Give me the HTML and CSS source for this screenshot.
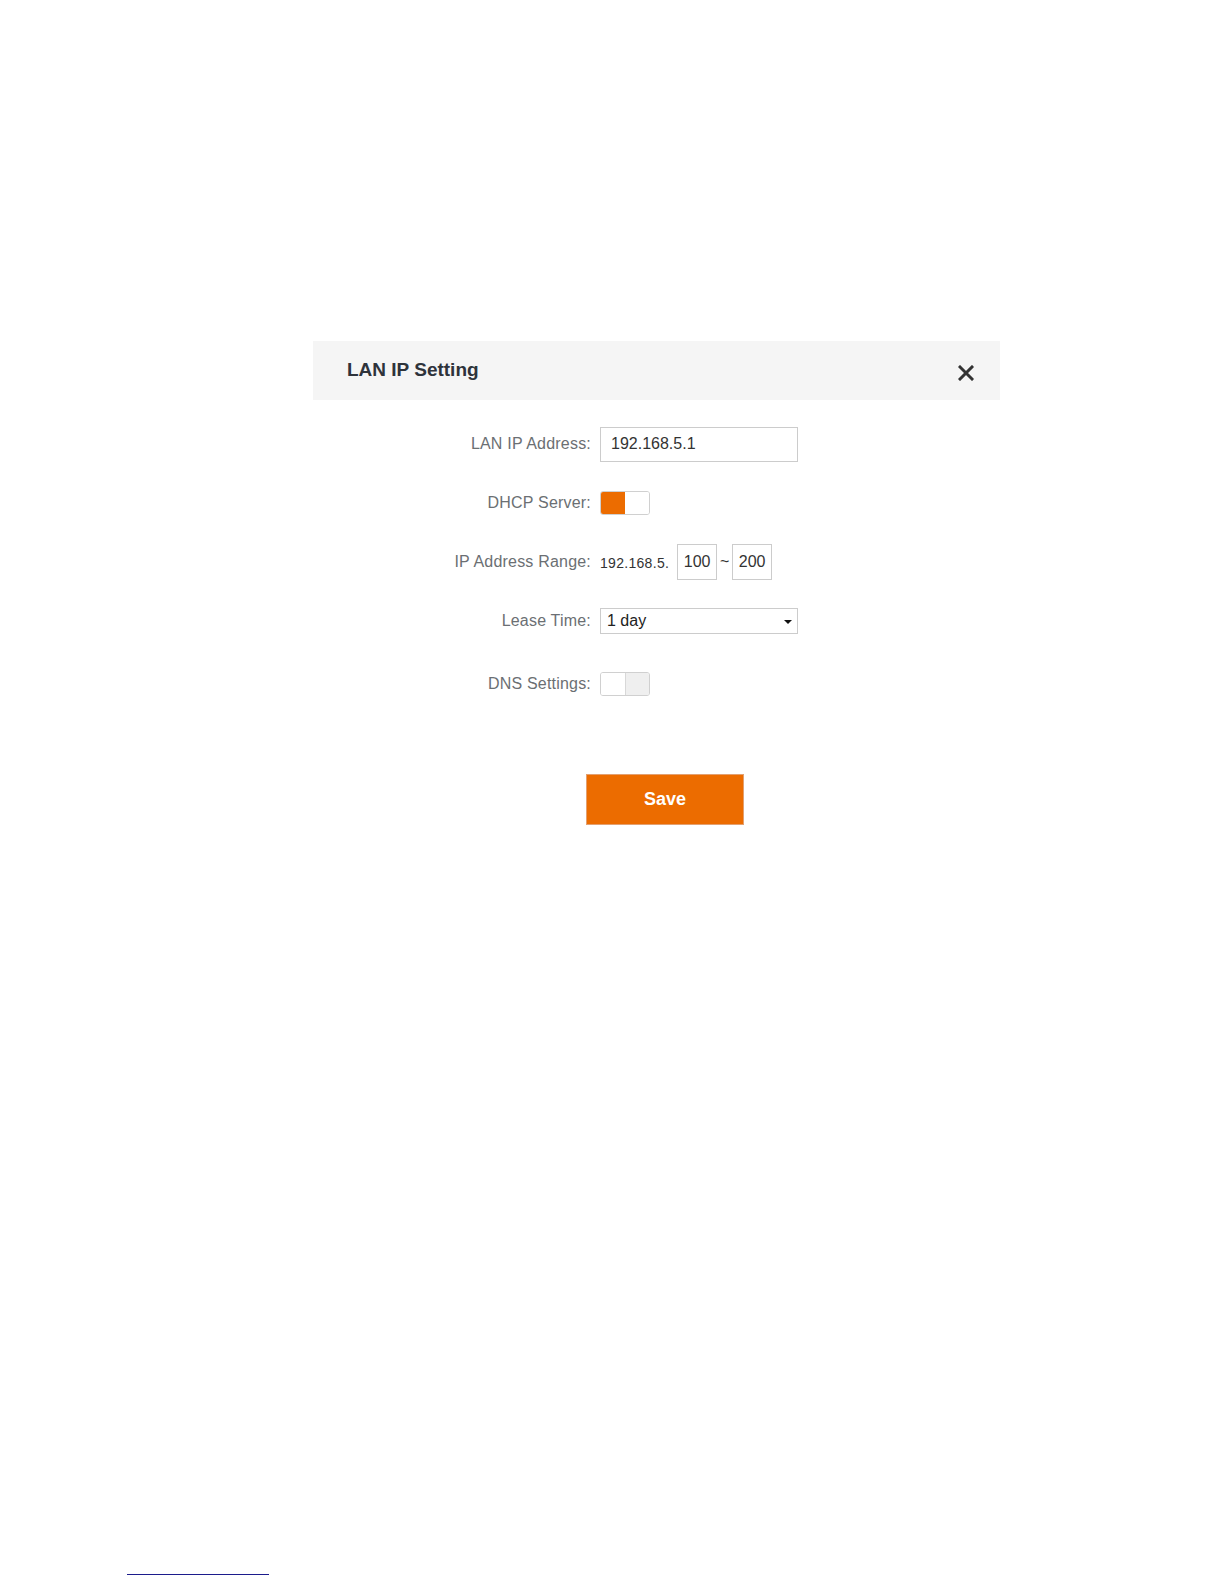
FILE: index.html
```html
<!DOCTYPE html>
<html lang="en">
<head>
    <meta charset="UTF-8">
    <meta name="viewport" content="width=device-width, initial-scale=1.0">
    <title>LAN IP Setting</title>
    <link rel="stylesheet" href="styles.css">
</head>
<body>
    <div class="page">
        <div class="dialog">
            <div class="dialog-head">
                <h1>LAN IP Setting</h1>
                <span class="close">
                    <svg width="16" height="16" viewBox="0 0 16 16">
                        <path d="M2 2 L14 14 M14 2 L2 14" stroke="#333" stroke-width="3" stroke-linecap="square"/>
                    </svg>
                </span>
            </div>

            <form class="dialog-body">
                <div class="row">
                    <label for="lanip">LAN IP Address:</label>
                    <input type="text" id="lanip" class="text-input" value="192.168.5.1">
                </div>

                <div class="row">
                    <label>DHCP Server:</label>
                    <span class="toggle on"><span></span><span></span></span>
                </div>

                <div class="row">
                    <label>IP Address Range:</label>
                    <div class="range">
                        <span class="prefix">192.168.5.</span>
                        <input type="text" class="small-input" value="100">
                        <span class="tilde">~</span>
                        <input type="text" class="small-input" value="200">
                    </div>
                </div>

                <div class="row">
                    <label>Lease Time:</label>
                    <div class="select">
                        <span>1 day</span>
                        <span class="caret"></span>
                    </div>
                </div>

                <div class="row row-dns">
                    <label>DNS Settings:</label>
                    <span class="toggle"><span></span><span></span></span>
                </div>

                <button type="button" class="save">Save</button>
            </form>
        </div>
    </div>

    <div class="footnote-line"></div>
</body>
</html>
```

FILE: styles.css
```css
body {
    margin: 0;
    font-family: "Liberation Sans", Arial, sans-serif;
    background-color: #fff;
    height: 1584px;
    position: relative;
}
.page {
    padding-top: 341px;
    padding-left: 313px;
}
.dialog {
    width: 687px;
}
.dialog-head {
    height: 59px;
    background-color: #f5f5f5;
    display: flex;
    align-items: center;
    justify-content: space-between;
    padding: 0 26px 0 34px;
}
.dialog-head h1 {
    margin: 0;
    font-size: 19px;
    font-weight: bold;
    color: #2e333b;
    padding-bottom: 2px;
}
.close {
    display: flex;
    margin-top: 4px;
}
.dialog-body {
    padding-top: 26px;
    display: flex;
    flex-direction: column;
    gap: 23px;
}
.row {
    display: grid;
    grid-template-columns: 278px 1fr;
    column-gap: 9px;
    align-items: center;
    height: 36px;
}
.row label {
    text-align: right;
    font-size: 16px;
    letter-spacing: 0.2px;
    color: #6b6f73;
}
.row-dns {
    margin-top: 4px;
}
.text-input {
    width: 198px;
    height: 35px;
    box-sizing: border-box;
    border: 1px solid #ccc;
    padding: 0 10px;
    font-family: inherit;
    font-size: 16px;
    color: #333;
    outline: none;
}
.toggle {
    display: flex;
    width: 50px;
    height: 24px;
    box-sizing: border-box;
    border: 1px solid #d0d0d0;
    border-radius: 3px;
    overflow: hidden;
}
.toggle span {
    flex: 1;
    background-color: #fff;
}
.toggle span + span {
    background-color: #efefef;
    border-left: 1px solid #d8d8d8;
}
.toggle.on span:first-child {
    background-color: #ec6c00;
}
.toggle.on span + span {
    background-color: #fff;
    border-left: none;
}
.range {
    display: flex;
    align-items: center;
    color: #333;
}
.prefix {
    font-size: 14px;
    letter-spacing: 0.3px;
    margin-top: 2px;
    margin-right: 8px;
}
.small-input {
    width: 40px;
    height: 36px;
    box-sizing: border-box;
    border: 1px solid #ccc;
    padding: 0;
    text-align: center;
    font-family: inherit;
    font-size: 16px;
    color: #333;
    outline: none;
}
.tilde {
    font-size: 16px;
    width: 15px;
    text-align: center;
}
.select {
    width: 198px;
    height: 26px;
    box-sizing: border-box;
    border: 1px solid #ccc;
    display: flex;
    align-items: center;
    justify-content: space-between;
    padding: 0 5px 0 6px;
    font-size: 16px;
    color: #222;
}
.caret {
    width: 0;
    height: 0;
    border-left: 4px solid transparent;
    border-right: 4px solid transparent;
    border-top: 4px solid #111;
    margin-top: 2px;
}
.save {
    margin-top: 49px;
    margin-left: 273px;
    width: 158px;
    height: 51px;
    border: 1px solid #e3a070;
    background-color: #ec6c00;
    color: #fff;
    font-family: inherit;
    font-size: 18px;
    font-weight: bold;
    cursor: pointer;
}
.footnote-line {
    position: absolute;
    left: 127px;
    top: 1574px;
    width: 142px;
    height: 1px;
    border-top: 1px solid #1c1c8c;
}
```
